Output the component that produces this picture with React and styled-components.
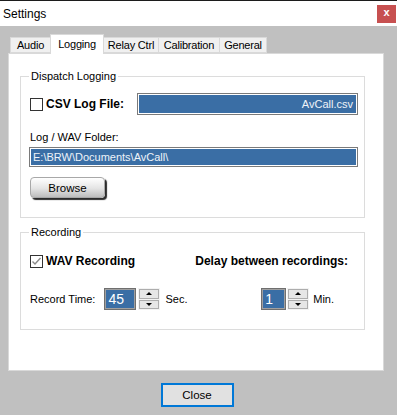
import React from "react"
import styled, { createGlobalStyle } from "styled-components"

const GlobalStyle = createGlobalStyle`
  html, body {
    margin: 0;
    padding: 0;
  }
  body {
    width: 397px;
    height: 415px;
    overflow: hidden;
    font-family: "Liberation Sans", Arial, sans-serif;
    color: #000;
  }
  * { box-sizing: border-box; }
`

const Window = styled.div`
  width: 397px;
  height: 415px;
  display: flex;
  flex-direction: column;
`

const TitleBar = styled.div`
  height: 26px;
  border-top: 1px solid #1c1c1c;
  background: #fff;
  display: flex;
  align-items: center;
  justify-content: space-between;
  padding: 0 1px 0 3px;
`

const Title = styled.span`
  font-size: 12px;
`

const CloseX = styled.div`
  width: 19px;
  height: 18px;
  background: #c75050;
  color: #fff;
  font-size: 11px;
  font-weight: bold;
  display: flex;
  align-items: center;
  justify-content: center;
  line-height: 1;
  padding-bottom: 2px;
`

const Body = styled.div`
  flex: 1;
  background: #c0c0c0;
  padding: 8px 11px 0 8px;
  display: flex;
  flex-direction: column;
`

const TabStrip = styled.div`
  display: flex;
  align-items: flex-start;
  height: 20px;
  padding-left: 2px;
  position: relative;
  z-index: 1;
`

const Tab = styled.div`
  width: ${p => p.$w}px;
  height: ${p => (p.$active ? 20 : 16)}px;
  margin-top: ${p => (p.$active ? 0 : 3)}px;
  margin-left: ${p => (p.$first ? 0 : -1)}px;
  padding-bottom: ${p => (p.$active ? 1 : 0)}px;
  background: ${p => (p.$active ? "#fff" : "#f0f0f0")};
  border: 1px solid #d9d9d9;
  border-bottom: ${p => (p.$active ? "none" : "1px solid #d9d9d9")};
  font-size: 11px;
  letter-spacing: -0.2px;
  white-space: nowrap;
  display: flex;
  align-items: center;
  justify-content: center;
  position: relative;
  z-index: ${p => (p.$active ? 2 : 1)};
`

const Panel = styled.div`
  width: 376px;
  height: 318px;
  margin-top: -1px;
  background: #fff;
  border: 1px solid #d9d9d9;
  padding: 15px 0 0 11px;
  display: flex;
  flex-direction: column;
`

const Group = styled.fieldset`
  width: 345px;
  margin: ${p => p.$top || 0}px 0 0 0;
  padding: ${p => p.$padTop}px 6px 19px 8px;
  border: 1px solid #dcdcdc;
  min-width: 0;
  display: flex;
  flex-direction: column;
`

const Legend = styled.legend`
  padding: 0 2px;
  font-size: 11px;
  line-height: 14px;
`

const Row = styled.div`
  display: flex;
  align-items: center;
  height: ${p => p.$h}px;
  margin-top: ${p => p.$top || 0}px;
  justify-content: ${p => p.$spread ? "space-between" : "flex-start"};
`

const Cluster = styled.div`
  display: flex;
  align-items: center;
  margin-left: ${p => p.$ml || 0}px;
  margin-right: ${p => p.$mr || 0}px;
`

const Box = styled.div`
  width: 13px;
  height: 13px;
  margin-left: 1px;
  border: 1px solid #333;
  background: #fff;
  display: flex;
  align-items: center;
  justify-content: center;
`

const BoldLabel = styled.span`
  font-size: 12px;
  font-weight: bold;
  margin-left: ${p => p.$ml || 0}px;
  margin-right: ${p => p.$mr || 0}px;
`

const Label = styled.div`
  font-size: 11px;
  line-height: 14px;
  margin-top: ${p => p.$top || 0}px;
  margin-left: ${p => p.$ml || 0}px;
`

const Field = styled.div`
  height: ${p => p.$h}px;
  flex: ${p => (p.$grow ? 1 : "none")};
  margin-top: ${p => p.$top || 0}px;
  margin-left: ${p => p.$ml || 0}px;
  border: 1px solid #7a7a7a;
  box-shadow: inset 0 0 0 1px #ffffff;
  background: #3a6ea5;
  color: #eef3f9;
  font-size: 11px;
  display: flex;
  align-items: center;
  justify-content: ${p => (p.$right ? "flex-end" : "flex-start")};
  padding: 0 4px 0 3px;
  white-space: nowrap;
`

const BrowseButton = styled.div`
  width: 75px;
  height: 21px;
  margin-top: 10px;
  margin-left: 1px;
  border: 1px solid #a8a8a8;
  border-radius: 4px;
  background: linear-gradient(#ffffff 0%, #e4e4e4 55%, #bdbdbd 100%);
  box-shadow: 2px 2px 1px #2b2b2b;
  font-size: 11.5px;
  display: flex;
  align-items: center;
  justify-content: center;
`

const SpinBox = styled.div`
  width: ${p => p.$w}px;
  height: 22px;
  margin-left: ${p => p.$ml || 0}px;
  border: 1px solid #6f6f6f;
  box-shadow: inset 0 0 0 1px #a0a0a0;
  background: #3a6ea5;
  color: #fff;
  font-size: 14px;
  display: flex;
  align-items: center;
  padding-left: 3px;
`

const Spinner = styled.div`
  width: 22px;
  height: 22px;
  margin-left: ${p => p.$ml || 0}px;
  padding: 1px;
  background: #f3f3f3;
  display: flex;
  flex-direction: column;
  gap: 1px;
`

const SpinButton = styled.div`
  flex: 1;
  border: 1px solid #adadad;
  background: #e6e6e6;
  display: flex;
  align-items: center;
  justify-content: center;
  &::after {
    content: "";
    border-left: 3px solid transparent;
    border-right: 3px solid transparent;
    ${p => (p.$down ? "border-top: 3px solid #000;" : "border-bottom: 3px solid #000;")}
  }
`

const Unit = styled.span`
  font-size: 11px;
  margin-left: ${p => p.$ml || 0}px;
`

const CloseRow = styled.div`
  display: flex;
  justify-content: center;
  margin-top: 12px;
`

const CloseButton = styled.div`
  width: 73px;
  height: 24px;
  border: 2px solid #0078d7;
  background: #e1e1e1;
  font-size: 11.5px;
  display: flex;
  align-items: center;
  justify-content: center;
`

const tabs = [
  { name: "Audio", w: 41 },
  { name: "Logging", w: 54 },
  { name: "Relay Ctrl", w: 56 },
  { name: "Calibration", w: 62 },
  { name: "General", w: 48 },
]

function CheckBox({ checked }) {
  return (
    <Box>
      {checked && (
        <svg width="11" height="11" viewBox="0 0 11 11">
          <polyline points="1.5,5.5 4,8 9.5,2" fill="none" stroke="#8a8a8a" strokeWidth="1.4" />
        </svg>
      )}
    </Box>
  )
}

function Spin({ value, width, ml, unit, unitMl, spinMl }) {
  return (
    <>
      <SpinBox $w={width} $ml={ml}>{value}</SpinBox>
      <Spinner $ml={spinMl}>
        <SpinButton />
        <SpinButton $down />
      </Spinner>
      <Unit $ml={unitMl}>{unit}</Unit>
    </>
  )
}

export default function App() {
  return (
    <Window>
      <GlobalStyle />
      <TitleBar>
        <Title>Settings</Title>
        <CloseX>x</CloseX>
      </TitleBar>
      <Body>
        <TabStrip>
          {tabs.map((t, i) => (
            <Tab key={t.name} $w={t.w} $first={i === 0} $active={t.name === "Logging"}>
              {t.name}
            </Tab>
          ))}
        </TabStrip>
        <Panel>
          <Group $padTop={10}>
            <Legend>Dispatch Logging</Legend>
            <Row $h={22}>
              <CheckBox />
              <BoldLabel $ml={3}>CSV Log File:</BoldLabel>
              <Field $h={22} $grow $ml={13} $right>AvCall.csv</Field>
            </Row>
            <Label $top={15} $ml={1}>Log / WAV Folder:</Label>
            <Field $h={20} $top={3}>E:\BRW\Documents\AvCall\</Field>
            <BrowseButton>Browse</BrowseButton>
          </Group>
          <Group $top={7} $padTop={14}>
            <Legend>Recording</Legend>
            <Row $h={16} $spread>
              <Cluster>
                <CheckBox checked />
                <BoldLabel $ml={3}>WAV Recording</BoldLabel>
              </Cluster>
              <BoldLabel $mr={10}>Delay between recordings:</BoldLabel>
            </Row>
            <Row $h={22} $top={19} $spread>
              <Cluster $ml={1}>
                <Label>Record Time:</Label>
                <Spin value="45" width={32} ml={9} spinMl={2} unit="Sec." unitMl={5} />
              </Cluster>
              <Cluster $mr={24}>
                <Spin value="1" width={25} spinMl={1} unit="Min." unitMl={4} />
              </Cluster>
            </Row>
          </Group>
        </Panel>
        <CloseRow>
          <CloseButton>Close</CloseButton>
        </CloseRow>
      </Body>
    </Window>
  )
}
